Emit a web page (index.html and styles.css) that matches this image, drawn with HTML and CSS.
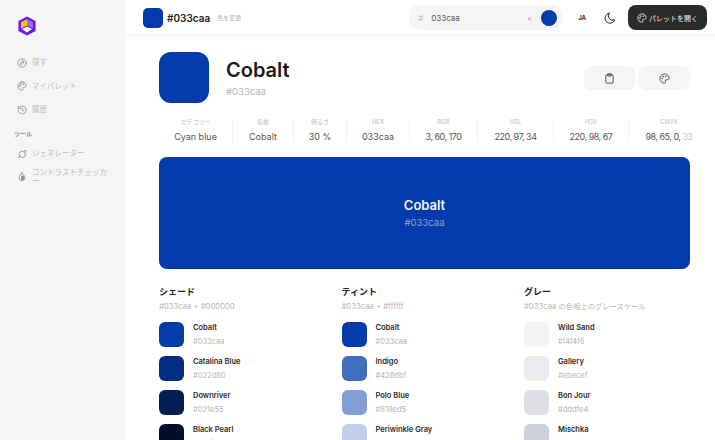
FILE: index.html
```html
<!DOCTYPE html>
<html lang="ja">
<head>
    <meta charset="UTF-8">
    <title>Cobalt #033caa</title>
    <link rel="stylesheet" href="styles.css">
</head>
<body>
    <aside class="sidebar">
        <svg class="logo" width="20" height="20" viewBox="0 0 20 20">
            <path d="M10 0.5 18.6 5v10L10 19.5 1.4 15V5Z" fill="#6a1be8"/>
            <path d="M10 3 4 6.2v6.4l6-3Z" fill="#fdc108"/>
            <path d="M10 3l6 3.2v6.4l-6-3Z" fill="#9a6cf0"/>
            <path d="M10 10.5l5 2.6-5 3.4-5-3.4Z" fill="#fff"/>
        </svg>
        <nav class="nav">
            <a class="nav-item">
                <svg class="nav-icon" viewBox="0 0 24 24"><circle cx="12" cy="12" r="10"/><path d="M16 8l-2 6-6 2 2-6Z"/></svg>
                <span>探す</span>
            </a>
            <a class="nav-item">
                <svg class="nav-icon" viewBox="0 0 24 24"><path d="M12 2a10 10 0 0 0 0 20c1.600 0 2.400-1 2.400-2.200 0-1.400-1-1.800-1-3 0-1 .8-1.800 2-1.800h2.400c2.400 0 4.200-1.800 4.200-4C22 6 17.500 2 12 2Z"/><circle cx="7" cy="12" r="1"/><circle cx="9" cy="7.500" r="1"/><circle cx="15" cy="7.500" r="1"/></svg>
                <span>マイパレット</span>
            </a>
            <a class="nav-item">
                <svg class="nav-icon" viewBox="0 0 24 24"><path d="M3 12a9.500 9.500 0 1 0 3-7L3 8"/><path d="M3 3v5h5"/><path d="M12 7v5l4 2"/></svg>
                <span>履歴</span>
            </a>
            <div class="nav-title">ツール</div>
            <a class="nav-item">
                <svg class="nav-icon" viewBox="0 0 24 24"><circle cx="13" cy="13" r="7.500"/><path d="M3 21l4-3.500"/><path d="M17 5l2-2.500 3 2.500-2 2.500"/></svg>
                <span>ジェネレーター</span>
            </a>
            <a class="nav-item">
                <svg class="nav-icon" viewBox="0 0 24 24"><path d="M12 2c3 4 7 7 7 12a7 7 0 0 1-14 0c0-5 4-8 7-12Z"/><path d="M12 9a5 5 0 0 1 0 10Z" fill="#8a8a8a"/></svg>
                <span>コントラストチェッカー</span>
            </a>
        </nav>
    </aside>

    <div class="main">
        <header class="topbar">
            <div class="swatch-sm"></div>
            <strong class="top-hex">#033caa</strong>
            <span class="top-change">色を変更</span>
            <div class="search">
                <span class="search-hash">#</span>
                <span class="search-value">033caa</span>
                <span class="search-x">×</span>
                <span class="search-dot"></span>
            </div>
            <span class="lang">JA</span>
            <svg class="moon" width="12" height="12" viewBox="0 0 24 24"><path d="M10 2.500a10 10 0 1 0 11.500 13A9 9 0 0 1 10 2.500Z"/></svg>
            <button class="open-btn">
                <svg width="10" height="10" viewBox="0 0 24 24"><path d="M12 2a10 10 0 0 0 0 20c1.600 0 2.400-1 2.400-2.200 0-1.400-1-1.800-1-3 0-1 .8-1.800 2-1.800h2.400c2.400 0 4.200-1.800 4.200-4C22 6 17.500 2 12 2Z"/><circle cx="7" cy="12" r="1"/><circle cx="9" cy="7.500" r="1"/><circle cx="15" cy="7.500" r="1"/></svg>
                パレットを開く
            </button>
        </header>

        <div class="content">
            <section class="head">
                <div class="swatch-lg"></div>
                <div class="head-text">
                    <h1>Cobalt</h1>
                    <p>#033caa</p>
                </div>
                <div class="head-actions">
                    <button class="action">
                        <svg width="11" height="11" viewBox="0 0 24 24"><rect x="4" y="4" width="16" height="18" rx="2"/><rect x="8" y="1.500" width="8" height="5" rx="1"/></svg>
                    </button>
                    <button class="action">
                        <svg width="11" height="11" viewBox="0 0 24 24"><path d="M12 2a10 10 0 0 0 0 20c1.600 0 2.400-1 2.400-2.200 0-1.400-1-1.800-1-3 0-1 .8-1.800 2-1.800h2.400c2.400 0 4.200-1.800 4.200-4C22 6 17.500 2 12 2Z"/><circle cx="7" cy="12" r="1"/><circle cx="9" cy="7.500" r="1"/><circle cx="15" cy="7.500" r="1"/></svg>
                    </button>
                </div>
            </section>

            <section class="stats">
                <div class="stat stat-cat"><span>カテゴリー</span><b>Cyan blue</b></div>
                <div class="stat stat-name"><span>名前</span><b>Cobalt</b></div>
                <div class="stat stat-light"><span>明るさ</span><b>30 %</b></div>
                <div class="stat stat-hex"><span>HEX</span><b>033caa</b></div>
                <div class="stat stat-num stat-rgb"><span>RGB</span><b>3, 60, 170</b></div>
                <div class="stat stat-num stat-hsl"><span>HSL</span><b>220, 97, 34</b></div>
                <div class="stat stat-num stat-hsv"><span>HSV</span><b>220, 98, 67</b></div>
                <div class="stat stat-num stat-cmyk"><span>CMYK</span><b>98, 65, 0, <em>33</em></b></div>
            </section>

            <section class="banner">
                <strong>Cobalt</strong>
                <span>#033caa</span>
            </section>

            <section class="lists">
                <div class="list">
                    <h3>シェード</h3>
                    <p class="list-sub">#033caa + #000000</p>
                    <div class="row"><i class="chip chip-cobalt"></i><div><b>Cobalt</b><span>#033caa</span></div></div>
                    <div class="row"><i class="chip chip-catalina"></i><div><b>Catalina Blue</b><span>#022d80</span></div></div>
                    <div class="row"><i class="chip chip-downriver"></i><div><b>Downriver</b><span>#021e55</span></div></div>
                    <div class="row"><i class="chip chip-pearl"></i><div><b>Black Pearl</b><span>#010f2b</span></div></div>
                </div>
                <div class="list">
                    <h3>ティント</h3>
                    <p class="list-sub">#033caa + #ffffff</p>
                    <div class="row"><i class="chip chip-cobalt"></i><div><b>Cobalt</b><span>#033caa</span></div></div>
                    <div class="row"><i class="chip chip-indigo"></i><div><b>Indigo</b><span>#426dbf</span></div></div>
                    <div class="row"><i class="chip chip-polo"></i><div><b>Polo Blue</b><span>#819ed5</span></div></div>
                    <div class="row"><i class="chip chip-peri"></i><div><b>Periwinkle Gray</b><span>#c0ceea</span></div></div>
                </div>
                <div class="list">
                    <h3>グレー</h3>
                    <p class="list-sub">#033caa <span class="list-sub-ja">の色相上のグレースケール</span></p>
                    <div class="row"><i class="chip chip-sand"></i><div><b>Wild Sand</b><span>#f4f4f6</span></div></div>
                    <div class="row"><i class="chip chip-gallery"></i><div><b>Gallery</b><span>#ebecef</span></div></div>
                    <div class="row"><i class="chip chip-bonjour"></i><div><b>Bon Jour</b><span>#dddfe4</span></div></div>
                    <div class="row"><i class="chip chip-mischka"></i><div><b>Mischka</b><span>#ccd0d8</span></div></div>
                </div>
            </section>
        </div>
    </div>
</body>
</html>
```
FILE: styles.css
```css
* {
    box-sizing: border-box;
}
body {
    margin: 0;
    display: flex;
    height: 440px;
    overflow: hidden;
    background: #fff;
    color: #1b1b1b;
    font-family: Inter, "Noto Sans CJK JP", sans-serif;
}
svg {
    display: block;
    flex: none;
}
h1, h3, p {
    margin: 0;
}

.sidebar {
    width: 126px;
    flex: none;
    background: #f5f5f5;
    padding: 16px 14px 0 14px;
}
.logo {
    margin-left: 3px;
}
.nav {
    margin-top: 15px;
}
.nav-item {
    display: flex;
    align-items: center;
    height: 23.5px;
    padding-left: 3px;
    font-size: 7.500px;
    color: #bdbdbd;
}
.nav-item span {
    width: 76px;
    margin-left: 5px;
    line-height: 9px;
    line-break: anywhere;
}
.nav-icon {
    width: 10px;
    height: 10px;
    fill: none;
    stroke: #8a8a8a;
    stroke-width: 2;
    stroke-linecap: round;
    stroke-linejoin: round;
}
.nav-title {
    margin: 8px 0 4.500px 0;
    font-size: 6px;
    line-height: 8px;
    font-weight: 700;
    color: #8d8d8d;
}

.main {
    flex: 1;
    min-width: 0;
}
.topbar {
    display: flex;
    align-items: center;
    height: 36px;
    padding: 0 8px 0 17px;
    border-bottom: 1px solid #f0f0f0;
}
.swatch-sm {
    width: 20px;
    height: 20px;
    border-radius: 5px;
    background: #033caa;
}
.top-hex {
    margin-left: 4px;
    font-size: 10px;
    font-weight: 600;
    color: #222;
}
.top-change {
    margin-left: 7px;
    font-size: 6px;
    color: #b5b5b5;
}
.search {
    display: flex;
    align-items: center;
    width: 153px;
    height: 25px;
    margin-left: auto;
    padding: 0 5px 0 9px;
    border-radius: 9px;
    background: #f5f5f5;
    font-size: 8px;
    color: #555;
}
.search-hash {
    color: #bbb;
}
.search-value {
    margin-left: 8px;
}
.search-x {
    margin-left: auto;
    color: #aaa;
    font-size: 8px;
}
.search-dot {
    width: 16px;
    height: 16px;
    margin-left: 9px;
    border-radius: 50%;
    background: #033caa;
}
.lang {
    margin-left: 16px;
    font-size: 6px;
    font-weight: 700;
    color: #333;
}
.moon {
    margin-left: 18px;
    fill: none;
    stroke: #222;
    stroke-width: 2;
    stroke-linecap: round;
    stroke-linejoin: round;
}
.open-btn {
    display: flex;
    align-items: center;
    gap: 2px;
    width: 79px;
    height: 25px;
    margin-left: 12px;
    padding: 0 0 0 9px;
    border: 0;
    border-radius: 8px;
    background: #2a2a2a;
    color: #f2f2f2;
    font-family: inherit;
    font-size: 7px;
    white-space: nowrap;
}
.open-btn svg {
    fill: none;
    stroke: #f2f2f2;
    stroke-width: 2;
}

.content {
    padding: 16px 25px 0 33px;
}
.head {
    display: flex;
    align-items: flex-start;
}
.swatch-lg {
    width: 50px;
    height: 51px;
    border-radius: 12px;
    background: #033caa;
}
.head-text {
    margin-left: 17px;
}
.head-text h1 {
    margin-top: 5px;
    font-size: 20px;
    line-height: 26px;
    font-weight: 600;
    color: #1c1c1c;
}
.head-text p {
    margin-top: 3px;
    font-size: 9.500px;
    color: #b3b3b3;
}
.head-actions {
    display: flex;
    gap: 4px;
    margin-left: auto;
    margin-top: 14px;
}
.action {
    display: flex;
    align-items: center;
    justify-content: center;
    width: 51px;
    height: 24px;
    padding: 0;
    border: 0;
    border-radius: 7px;
    background: #f5f5f5;
}
.action svg {
    fill: none;
    stroke: #444;
    stroke-width: 2;
}

.stats {
    display: flex;
    height: 25px;
    margin-top: 15px;
}
.stat {
    display: flex;
    flex-direction: column;
    align-items: center;
    justify-content: space-between;
    flex: none;
    border-right: 1px solid #f2f2f2;
    white-space: nowrap;
}
.stat:last-child {
    border-right: 0;
}
.stat span {
    font-size: 6px;
    line-height: 8px;
    color: #bbb;
}
.stat b {
    font-size: 9px;
    line-height: 12px;
    font-weight: 400;
    color: #555;
}
.stat-num b {
    letter-spacing: -0.5px;
}
.stat em {
    font-style: normal;
    color: #c4c4c4;
}
.stat-cat { width: 74px; }
.stat-name { width: 61px; }
.stat-light { width: 53px; }
.stat-hex { width: 63px; }
.stat-rgb { width: 68px; }
.stat-hsl { width: 76px; }
.stat-hsv { width: 75px; }
.stat-cmyk { width: 80px; }

.banner {
    display: flex;
    flex-direction: column;
    align-items: center;
    justify-content: center;
    height: 112px;
    margin-top: 14px;
    padding-bottom: 2px;
    border-radius: 8px;
    background: #033caa;
}
.banner strong {
    font-size: 13px;
    line-height: 17px;
    font-weight: 600;
    color: #f2f4fa;
}
.banner span {
    margin-top: 3px;
    font-size: 9.500px;
    color: #8ba3d6;
}

.lists {
    display: grid;
    grid-template-columns: repeat(3, 182.500px);
    margin-top: 16px;
}
.list h3 {
    font-size: 9px;
    line-height: 14px;
    font-weight: 700;
    color: #222;
}
.list-sub {
    height: 12px;
    margin-top: 2px;
    margin-bottom: 4.500px;
    font-size: 7.700px;
    line-height: 12px;
    color: #b5b5b5;
}
.list-sub-ja {
    font-size: 7.300px;
}
.row {
    display: flex;
    align-items: center;
    gap: 9px;
    height: 34px;
}
.row div {
    display: flex;
    flex-direction: column;
    gap: 3px;
}
.row b {
    font-size: 7.500px;
    line-height: 10px;
    font-weight: 600;
    color: #2b2b2b;
}
.row span {
    font-size: 7.500px;
    line-height: 11px;
    color: #b5b5b5;
}
.chip {
    display: block;
    flex: none;
    width: 25px;
    height: 25px;
    border-radius: 6px;
}
.chip-cobalt { background: #033caa; }
.chip-catalina { background: #022d80; }
.chip-downriver { background: #021e55; }
.chip-pearl { background: #010f2b; }
.chip-indigo { background: #426dbf; }
.chip-polo { background: #819ed5; }
.chip-peri { background: #c0ceea; }
.chip-sand { background: #f4f4f6; }
.chip-gallery { background: #ebecef; }
.chip-bonjour { background: #dddfe4; }
.chip-mischka { background: #ccd0d8; }
```
